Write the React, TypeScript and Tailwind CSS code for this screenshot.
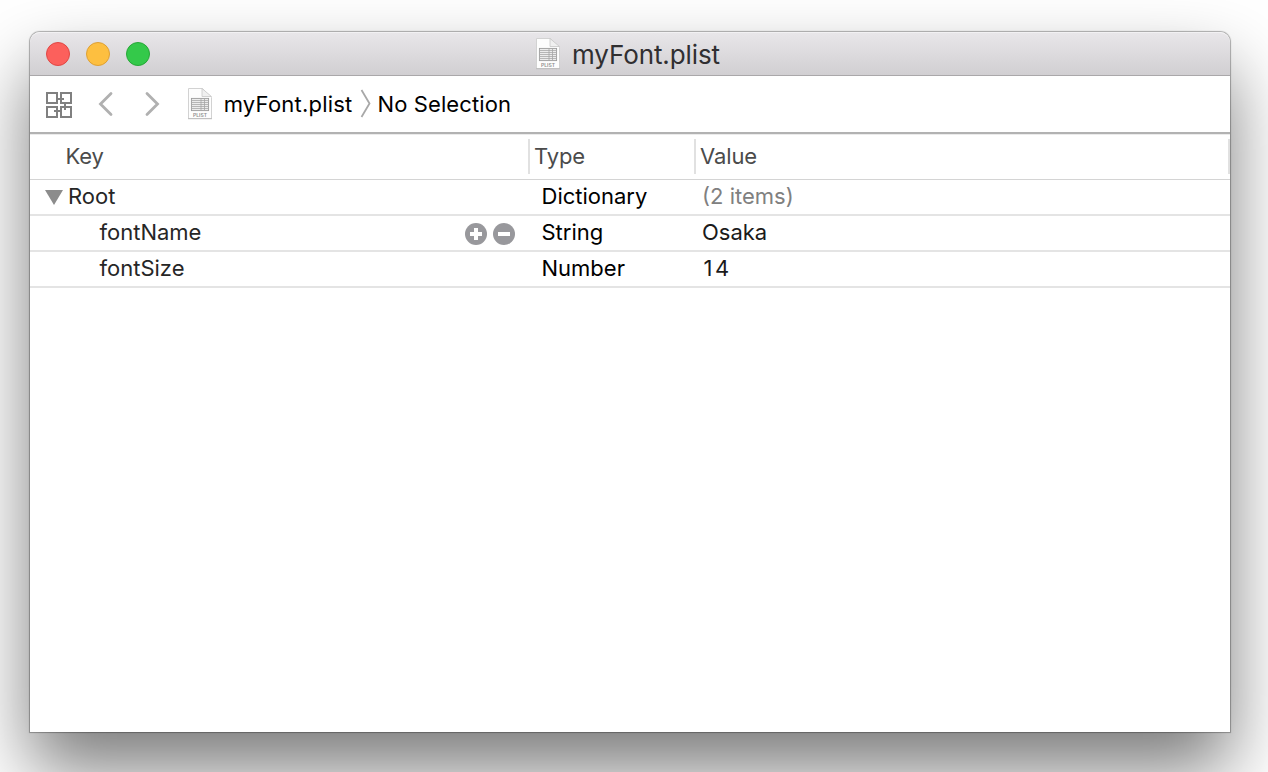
import type { ReactNode } from "react";

function PlistIcon() {
  return (
    <svg width="26" height="34" viewBox="0 0 26 34" className="shrink-0">
      <path d="M1.5 1.5H15.5L24.5 10.5V31.5H1.5Z" fill="#fdfdfd" stroke="#d2d2d2" />
      <path d="M1 31.7H25" stroke="#bcbcbc" />
      <path d="M15 1.5V9.5H24.5Z" fill="#f0f0f0" stroke="#c8c8c8" strokeWidth="0.8" />
      <rect x="4.4" y="11.4" width="17.2" height="12.2" fill="#ececec" stroke="#9c9c9c" strokeWidth="0.9" />
      <path d="M5 13.5H21M5 15.5H21M5 17.5H21M5 19.5H21M5 21.5H21" stroke="#b0b0b0" strokeWidth="0.9" />
      <path d="M14 11.5V23.5M17.5 11.5V23.5" stroke="#a6a6a6" strokeWidth="0.8" />
      <text x="13" y="29.6" textAnchor="middle" fontSize="5" fontWeight="600" fill="#8f8f8f" className="font-['Inter',sans-serif]">
        PLIST
      </text>
    </svg>
  );
}

function RelatedItemsIcon() {
  return (
    <svg width="26" height="26" viewBox="0 0 26 26" fill="none" stroke="#808080" strokeWidth="2" className="mt-[2px] shrink-0">
      <path d="M1 1H11V11H1ZM15 1H25V11H15ZM1 15H11V25H1ZM15 15H25V25H15Z" />
      <path d="M11 7H18M19 11V18M8 19H15" />
    </svg>
  );
}

type RowProps = { name: ReactNode; type: string; value: ReactNode };

function Row({ name, type, value }: RowProps) {
  return (
    <div className="flex h-9 items-start border-b-2 border-[#e4e4e4] leading-[32px]">
      <div className="flex w-[511.5px]">{name}</div>
      <div className="w-[160.5px] text-black">{type}</div>
      <div>{value}</div>
    </div>
  );
}

export default function App() {
  return (
    <div className="h-[772px] w-[1268px] overflow-hidden bg-white pt-8 pl-[30px] font-['Inter',sans-serif] text-[22px] whitespace-nowrap">
      <div className="h-[700px] w-[1200px] rounded-t-[10px] bg-white shadow-[0_0_1px_1px_rgba(0,0,0,0.3),0_38px_72px_rgba(0,0,0,0.52)]">
        <header className="flex h-11 items-center rounded-t-[10px] border-t border-b border-t-[#f2f1f3] border-b-[#aaa8aa] bg-linear-to-b from-[#e8e6e9] to-[#d1cfd2] pl-4">
          <div className="flex gap-4">
            <span className="size-6 rounded-full border border-[#e04744] bg-[#fc605c]" />
            <span className="size-6 rounded-full border border-[#dea034] bg-[#fdbf40]" />
            <span className="size-6 rounded-full border border-[#27a737] bg-[#34c94a]" />
          </div>
          <div className="ml-[385px] flex items-center">
            <PlistIcon />
            <h1 className="mt-px ml-[11px] text-[26px] font-normal tracking-[-0.1px] text-[#302f31]">myFont.plist</h1>
          </div>
        </header>

        <nav className="flex h-[58px] items-center border-b-2 border-[#b2b2b2] pl-4 text-black">
          <RelatedItemsIcon />
          <svg width="62" height="26" viewBox="0 0 62 26" fill="none" stroke="#b0b0b0" strokeWidth="2.8" strokeLinecap="round" className="ml-[26px]">
            <path d="M13 2.5L2.5 13L13 23.5M49 2.5L59.5 13L49 23.5" />
          </svg>
          <div className="ml-[27px]">
            <PlistIcon />
          </div>
          <span className="ml-[10.7px] w-[130px] pt-px tracking-[0.22px]">myFont.plist</span>
          <svg width="12" height="30" viewBox="0 0 12 30" fill="none" stroke="#a8a8a8" strokeWidth="1.8" className="ml-[6.3px]">
            <path d="M1.5 1L9.5 14.5L1.5 28" />
          </svg>
          <span className="ml-[5.5px] pt-px tracking-[0.1px]">No Selection</span>
        </nav>

        <div className="flex h-[46px] border-t border-b border-t-[#ebebeb] border-b-[#d4d4d4] pt-1 leading-[35px] tracking-[-0.1px] text-[#4b4b4b]">
          <div className="h-[35px] w-[500px] border-r-2 border-[#e1e1e1] pl-[35.5px]">Key</div>
          <div className="h-[35px] w-[166px] border-r-2 border-[#e1e1e1] pl-1">Type</div>
          <div className="h-[35px] flex-1 border-r-2 border-[#e1e1e1] pl-1">Value</div>
        </div>

        <main className="text-[#262626]">
          <Row
            name={
              <>
                <svg width="18" height="15" viewBox="0 0 18 15" className="mt-[10px] ml-[15px]">
                  <path d="M0 0H18L9 15Z" fill="#8c8c8c" />
                </svg>
                <span className="ml-[5px]">Root</span>
              </>
            }
            type="Dictionary"
            value={<span className="text-[#808080]">(2 items)</span>}
          />
          <Row
            name={
              <>
                <span className="w-[435px] pl-[69.5px]">fontName</span>
                <svg width="50" height="22" viewBox="0 0 50 22" className="mt-[7px]">
                  <circle cx="11" cy="11" r="11" fill="#98989c" />
                  <circle cx="39" cy="11" r="11" fill="#98989c" />
                  <path d="M5 11H17M11 5V17M33 11H45" stroke="white" strokeWidth="4" />
                </svg>
              </>
            }
            type="String"
            value={<span className="text-[#1a1a1a]">Osaka</span>}
          />
          <Row
            name={<span className="pl-[69.5px]">fontSize</span>}
            type="Number"
            value={<span className="pl-[1.5px] tracking-[2.6px] text-[#1a1a1a]">14</span>}
          />
        </main>
      </div>
    </div>
  );
}
